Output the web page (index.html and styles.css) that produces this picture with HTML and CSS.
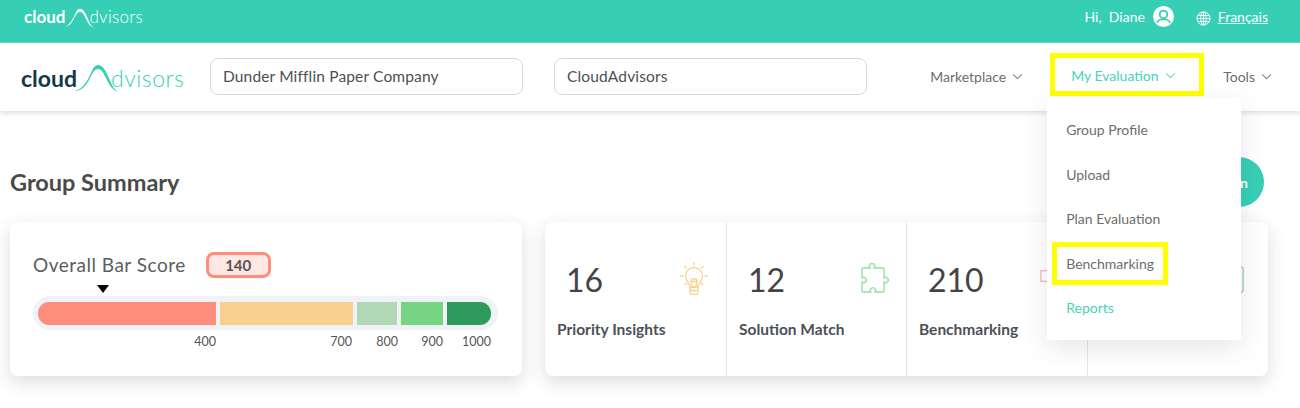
FILE: index.html
```html
<!DOCTYPE html>
<html lang="en">
<head>
<meta charset="utf-8">
<title>Group Summary</title>
<link rel="stylesheet" href="styles.css">
</head>
<body>
<header class="topbar">
  <div class="logo logo-small">
    <span class="logo-a">cloud</span>
    <svg class="logo-arc" viewBox="0 0 44 28"><path d="M0 27C8 26 13 18 17 9C19 4 21 1 24 1C28 1 31 5 34 12C37 19 39 25 44 27.500C38 26.500 35 20 32 14C29 8 27 5 24 5C21 5 19 8 17 12C13 21 8 27 0 27z" fill="currentColor"/></svg>
    <span class="logo-b">dvisors</span>
  </div>
  <div class="top-right">
    <span class="hi">Hi,&nbsp; Diane</span>
    <svg class="avatar" viewBox="0 0 20 20"><circle cx="10" cy="10" r="10" fill="#fff"/><circle cx="10" cy="8" r="3.600" fill="none" stroke="#36cfb6" stroke-width="1.800"/><path d="M3.500 16C5 13.200 7.500 12.600 10 12.600S15 13.200 16.500 16" fill="none" stroke="#36cfb6" stroke-width="1.500"/></svg>
    <svg class="globe" viewBox="0 0 16 16" fill="none" stroke="#fff" stroke-width="1"><circle cx="8" cy="8" r="7"/><ellipse cx="8" cy="8" rx="3" ry="7"/><path d="M1 8h14M2 4.800h12M2 11.200h12M8 1v14"/></svg>
    <a class="lang" href="#">Français</a>
  </div>
</header>

<nav class="navbar">
  <div class="logo logo-main">
    <span class="logo-a">cloud</span>
    <svg class="logo-arc" viewBox="0 0 44 28"><path d="M0 27C8 26 13 18 17 9C19 4 21 1 24 1C28 1 31 5 34 12C37 19 39 25 44 27.500C38 26.500 35 20 32 14C29 8 27 5 24 5C21 5 19 8 17 12C13 21 8 27 0 27z" fill="currentColor"/></svg>
    <span class="logo-b">dvisors</span>
  </div>
  <div class="field field-first">Dunder Mifflin Paper Company</div>
  <div class="field">CloudAdvisors</div>
  <div class="menu">
    <div class="menu-item">Marketplace <svg class="chev" viewBox="0 0 10 6"><path d="M1 1l4 4 4-4" fill="none" stroke="currentColor"/></svg></div>
    <div class="menu-item menu-active">My Evaluation <svg class="chev" viewBox="0 0 10 6"><path d="M1 1l4 4 4-4" fill="none" stroke="currentColor"/></svg>
      <ul class="dropdown">
        <li>Group Profile</li>
        <li>Upload</li>
        <li>Plan Evaluation</li>
        <li><span class="marked">Benchmarking</span></li>
        <li class="current">Reports</li>
      </ul>
    </div>
    <div class="menu-item">Tools <svg class="chev" viewBox="0 0 10 6"><path d="M1 1l4 4 4-4" fill="none" stroke="currentColor"/></svg></div>
  </div>
</nav>

<main class="page">
  <div class="title-row">
    <h1>Group Summary</h1>
    <button class="cta">Plan</button>
  </div>
  <div class="cards">
    <section class="card score">
      <div class="score-head">
        <span class="score-label">Overall Bar Score</span>
        <span class="score-badge">140</span>
      </div>
      <div class="marker"></div>
      <div class="track">
        <div class="seg s1"></div>
        <div class="seg s2"></div>
        <div class="seg s3"></div>
        <div class="seg s4"></div>
        <div class="seg s5"></div>
      </div>
      <div class="ticks">
        <span class="t1">400</span>
        <span class="t2">700</span>
        <span class="t3">800</span>
        <span class="t4">900</span>
        <span class="t5">1000</span>
      </div>
    </section>
    <section class="card stats">
      <div class="stat">
        <div class="stat-top"><span class="num">16</span>
          <svg class="ico ico-bulb" viewBox="0 0 28 33" fill="none" stroke="#fcd391" stroke-width="1.300"><path d="M14 0v3.500M4.500 4l2.300 2.300M23.500 4l-2.300 2.300M0 14h3.500M24.500 14H28M5 23l2.200-2.200M23 23l-2.200-2.200"/><path d="M10 25c0-4-4.500-5.500-4.500-11a8.500 8.500 0 0 1 17 0c0 5.500-4.500 7-4.500 11z"/><path d="M11.500 25v-8h5v8M10 19.500h8M10 25h8v6a1.500 1.500 0 0 1-1.500 1.500h-5A1.500 1.500 0 0 1 10 31zM10 28.500h8"/></svg>
        </div>
        <div class="stat-name">Priority Insights</div>
      </div>
      <div class="stat">
        <div class="stat-top"><span class="num">12</span>
          <svg class="ico ico-puzzle" viewBox="0 0 30 30" fill="none" stroke="#97e0a0" stroke-width="1.400"><path d="M2 5H9A2.700 2.700 0 1 1 13.200 5H22a1 1 0 0 1 1 1V14.800A2.700 2.700 0 1 1 23 19.200V28a1 1 0 0 1-1 1H14.200A2.700 2.700 0 1 0 9.800 29H2a1 1 0 0 1-1-1V19.200A2.700 2.700 0 1 0 1 14.800V6a1 1 0 0 1 1-1z"/></svg>
        </div>
        <div class="stat-name">Solution Match</div>
      </div>
      <div class="stat">
        <div class="stat-top"><span class="num">210</span>
          <svg class="ico ico-chart" viewBox="0 0 30 30" fill="none" stroke="#f0b8ae" stroke-width="1.300"><rect x="1" y="9" width="8" height="11"/><rect x="11" y="3" width="8" height="22"/></svg>
        </div>
        <div class="stat-name">Benchmarking</div>
      </div>
      <div class="stat">
        <div class="stat-top"><span class="num">&nbsp;</span>
          <svg class="ico ico-last" viewBox="0 0 30 30" fill="none" stroke="#97cfa0" stroke-width="1.300"><rect x="1" y="2" width="28" height="26" rx="2"/></svg>
        </div>
      </div>
    </section>
  </div>
</main>
</body>
</html>
```
FILE: styles.css
```css
* { box-sizing: border-box; }
html, body { margin: 0; padding: 0; }
body {
  width: 1300px;
  height: 408px;
  overflow: hidden;
  background: #fff;
  font-family: Lato, "Noto Sans", sans-serif;
  color: #4a4a4a;
}

/* top bar */
.topbar {
  height: 43px;
  background: #36cfb6;
  border-bottom: 1px solid #6edccb;
  display: flex;
  align-items: center;
  justify-content: space-between;
  padding: 0 32px 9px 24px;
  color: #fff;
}
.top-right { display: flex; align-items: center; font-size: 14px; }
.avatar { width: 21px; height: 21px; margin-left: 8px; }
.globe { width: 15px; height: 15px; margin-left: 22px; margin-top: 3px; }
.lang { color: #fff; margin-left: 7px; text-decoration: underline; }

/* logo */
.logo { display: inline-flex; flex: none; align-items: flex-end; line-height: 1; }
.logo-a { font-weight: 700; }
.logo-b { font-weight: 300; }
.logo-small { font-size: 17px; color: #fff; }
.logo-small .logo-arc { width: 31px; height: 20px; margin: 0 -5px -3px -2px; }
.logo-small .logo-b { letter-spacing: .3px; }
.logo-main { width: 163px; font-size: 23px; color: #36cfb6; }
.logo-main .logo-arc { width: 44px; height: 28px; flex: none; margin: 0 -7px -2px -3px; }
.logo-main .logo-a { color: #12384a; }
.logo-main .logo-b { letter-spacing: .5px; }

/* nav */
.navbar {
  height: 68px;
  background: #fff;
  box-shadow: 0 2px 5px rgba(0, 0, 0, .14);
  display: flex;
  align-items: center;
  padding: 0 28px 1px 21px;
  position: relative;
  z-index: 2;
}
.field {
  width: 313px;
  height: 37px;
  margin-left: 31px;
  padding: 0 0 2px 12px;
  border: 1px solid #d5d9e0;
  border-radius: 8px;
  display: flex;
  align-items: center;
  font-size: 15.500px;
  letter-spacing: .15px;
  color: #4d4f53;
}
.field-first { margin-left: 26px; }
.menu { margin-left: auto; display: flex; align-items: center; font-size: 14px; color: #6d6d6d; padding-bottom: 1px; }
.menu-item { display: flex; align-items: center; gap: 6px; position: relative; }
.menu-active {
  width: 154px;
  height: 43px;
  margin: 0 19px 4px 27px;
  padding: 3px 0 0 16px;
  border: 5px solid #ffff00;
  color: #46d3bb;
}
.chev { width: 11px; height: 7px; opacity: .8; }

/* dropdown */
.dropdown {
  position: absolute;
  top: 40px;
  left: -8px;
  width: 194px;
  height: 242px;
  margin: 0;
  padding: 10px 0 0 19px;
  list-style: none;
  background: #fff;
  box-shadow: 0 8px 24px rgba(60, 60, 90, .12);
  color: #6d6d6d;
  z-index: 5;
}
.dropdown li { height: 44.500px; display: flex; align-items: center; }
.dropdown .marked {
  margin-left: -14px;
  padding: 8px 9px;
  border: 5px solid #ffff00;
}
.dropdown .current { color: #46d3bb; }

/* page */
.page { padding: 0 32px 0 10px; }
.title-row { height: 111px; display: flex; align-items: center; justify-content: space-between; padding-top: 31px; }
h1 { margin: 0; font-size: 23.500px; font-weight: 700; color: #4a4a4a; }
.cta {
  height: 50px;
  width: 130px;
  margin-right: 4px;
  padding: 0 16px 0 0;
  text-align: right;
  border: 0;
  border-radius: 25px;
  background: #36cfb6;
  color: #fff;
  font: 700 14px Lato, sans-serif;
}
.cards { display: flex; gap: 23px; }
.card {
  background: #fff;
  border-radius: 8px;
  height: 154px;
  box-shadow: 0 6px 18px rgba(40, 40, 60, .16);
}
.score { width: 512px; padding: 28px 24px 0 23px; }
.score-head { display: flex; align-items: center; gap: 20px; height: 28px; }
.score-label { font-size: 19px; letter-spacing: .5px; color: #5a5d62; }
.score-badge {
  width: 65px;
  height: 26px;
  margin-top: 2px;
  border: 3px solid #ff8d7c;
  border-radius: 8px;
  background: #ffe7e4;
  display: flex;
  align-items: center;
  justify-content: center;
  font-size: 15px;
  font-weight: 700;
  color: #555;
}
.marker {
  width: 0;
  height: 0;
  margin: 7px 0 3px 64px;
  border-left: 6px solid transparent;
  border-right: 6px solid transparent;
  border-top: 8px solid #000;
}
.track {
  height: 34px;
  border-radius: 17px;
  background: #eff3f7;
  display: flex;
  align-items: center;
  gap: 4px;
  padding: 0 6px 0 5px;
}
.seg { height: 23px; }
.s1 { width: 178px; background: #ff8d7c; border-radius: 11px 0 0 11px; }
.s2 { width: 133px; background: #f9cf8e; }
.s3 { width: 40px; background: #b2d9b6; }
.s4 { width: 42px; background: #76d582; }
.s5 { width: 44px; background: #2f9a5e; border-radius: 0 11px 11px 0; }
.ticks { height: 20px; font-size: 12.500px; color: #555; display: flex; padding-top: 4px; }
.ticks span { display: block; text-align: right; }
.t1 { width: 183px; }
.t2 { width: 136px; }
.t3 { width: 46px; }
.t4 { width: 45px; }
.t5 { width: 48px; }

.stats { width: 723px; display: grid; grid-template-columns: 182px 180px 181px 180px; }
.stat { padding: 30px 0 0 12px; border-right: 1px solid #e4e4e4; }
.stat:last-child { border-right: 0; }
.stat-top { display: flex; align-items: flex-start; justify-content: space-between; padding: 0 18px 0 9px; height: 54px; }
.num { font-size: 32px; line-height: 56px; color: #444; }
.ico { width: 29px; height: 31px; margin-top: 9px; }
.ico-bulb { width: 28px; height: 33px; margin-top: 10px; }
.ico-puzzle { width: 30px; height: 30px; margin: 11px -3px 0 0; }
.ico-last { margin: 12px 6px 0 0; }
.stat-name { font-size: 15.500px; font-weight: 700; color: #4c5058; margin-top: 14px; }
```
